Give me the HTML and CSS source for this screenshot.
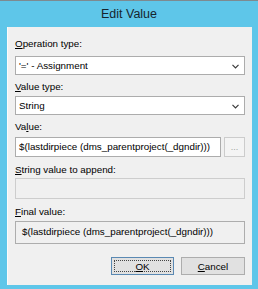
FILE: index.html
```html
<!DOCTYPE html>
<html>
<head>
<meta charset="utf-8">
<link rel="stylesheet" href="styles.css">
</head>
<body>
<div class="window">
  <div class="titlebar">Edit Value</div>
  <div class="client">
    <div class="label l1"><u>O</u>peration type:</div>
    <div class="combo c1"><span>'=' - Assignment</span><svg width="7" height="5" viewBox="0 0 7 5"><path d="M0.5 0.8 L3.5 3.8 L6.5 0.8" fill="none" stroke="#3a3a3a" stroke-width="1.2"/></svg></div>
    <div class="label l2"><u>V</u>alue type:</div>
    <div class="combo c2"><span>String</span><svg width="7" height="5" viewBox="0 0 7 5"><path d="M0.5 0.8 L3.5 3.8 L6.5 0.8" fill="none" stroke="#3a3a3a" stroke-width="1.2"/></svg></div>
    <div class="label l3">Va<u>l</u>ue:</div>
    <div class="row">
      <div class="text value">$(lastdirpiece (dms_parentproject(_dgndir)))</div>
      <div class="dots">...</div>
    </div>
    <div class="label l4"><u>S</u>tring value to append:</div>
    <div class="text disabled"></div>
    <div class="label l5"><u>F</u>inal value:</div>
    <div class="text final">$(lastdirpiece (dms_parentproject(_dgndir)))</div>
    <div class="buttons">
      <div class="btn ok"><span class="focus"><u>O</u>K</span></div>
      <div class="btn cancel"><u>C</u>ancel</div>
    </div>
  </div>
</div>
</body>
</html>
```

FILE: styles.css
```css
html, body {
  margin: 0;
  padding: 0;
}
body {
  width: 258px;
  height: 289px;
  background: #5ec6e9;
  font-family: "Liberation Sans", Arial, sans-serif;
  font-size: 9.8px;
  color: #000;
  overflow: hidden;
}
.window {
  display: flex;
  flex-direction: column;
  height: 289px;
  box-sizing: border-box;
  border-top: 1px solid #7d8a90;
}
.titlebar {
  height: 26px;
  line-height: 26px;
  text-align: center;
  font-size: 12.5px;
  color: #16252e;
}
.client {
  margin: 0 6px 4px 7px;
  flex: 1;
  background: #f0f0f0;
  border-left: 1px solid #fbfbfb;
  padding: 11px 7px 0 7px;
  display: flex;
  flex-direction: column;
}
.label {
  height: 12px;
  line-height: 12px;
  white-space: nowrap;
}
u { text-decoration: underline; text-underline-offset: 1px; }
.combo {
  height: 19px;
  box-sizing: border-box;
  border: 1px solid #acacac;
  background: #fff;
  display: flex;
  align-items: center;
  justify-content: space-between;
  padding: 0 5px 0 3px;
}
.combo span { line-height: 17px; }
.combo svg { margin-top: 1px; }
.c1 { margin-top: 6px; }
.l2 { margin-top: 6px; }
.c2 { margin-top: 3px; }
.l3 { margin-top: 6px; }
.row {
  display: flex;
  gap: 3px;
  margin-top: 4px;
}
.text {
  height: 20px;
  box-sizing: border-box;
  border: 1px solid #acacac;
  background: #fff;
  line-height: 18px;
  padding: 0 3px;
  white-space: nowrap;
  overflow: hidden;
}
.value { flex: 1; min-width: 0; }
.dots {
  width: 21px;
  flex: none;
  height: 20px;
  box-sizing: border-box;
  border: 1px solid #cccccc;
  background: #f4f4f4;
  color: #a0a0a0;
  text-align: center;
  line-height: 18px;
  font-size: 9px;
}
.l4 { margin-top: 7px; }
.disabled {
  height: 21px;
  background: #f0f0f0;
  border-color: #cdcdcd;
  margin-top: 2px;
}
.l5 { margin-top: 7px; }
.final {
  background: #f0f0f0;
  border-color: #adadad;
  height: 23px;
  line-height: 20px;
  padding: 0 6px;
  margin-top: 3px;
}
.buttons {
  display: flex;
  justify-content: flex-end;
  gap: 7px;
  margin-top: 13px;
}
.btn {
  height: 18px;
  box-sizing: border-box;
  border: 1px solid #adadad;
  background: #e1e1e1;
  display: flex;
  align-items: center;
  justify-content: center;
}
.btn.ok {
  width: 63px;
  border-color: #5a89b3;
  padding: 2px;
}
.btn.cancel { width: 64px; }
.focus {
  display: flex;
  align-items: center;
  justify-content: center;
  width: 100%;
  height: 100%;
  box-sizing: border-box;
  border: 1px dotted #444;
}
```
